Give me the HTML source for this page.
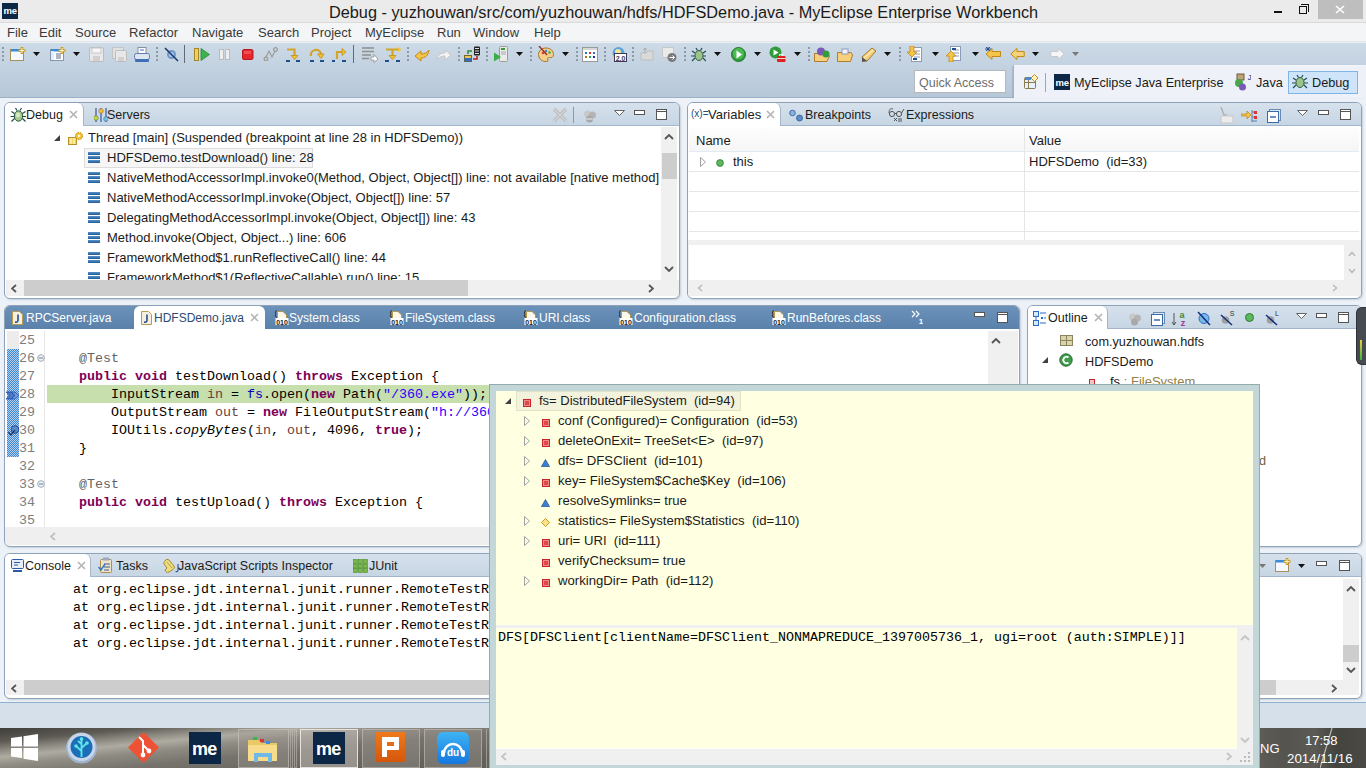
<!DOCTYPE html>
<html><head><meta charset="utf-8">
<style>
*{box-sizing:border-box;margin:0;padding:0}
html,body{width:1366px;height:768px;overflow:hidden;background:#edf2f8;font-family:"Liberation Sans",sans-serif;font-size:13px;color:#1b1b1b}
.a{position:absolute}
.t{position:absolute;white-space:pre;line-height:16px}
.mono{font-family:"Liberation Mono",monospace}
#title{left:0;top:0;width:1366px;height:23px;background:#ebebeb;border-bottom:1px solid #dadada}
#menu{left:0;top:23px;width:1366px;height:19px;background:#f4f5f7;border-bottom:1px solid #e2e5e9}
#menu .t{top:2px;margin-left:-1px;color:#3a3a3a}
#tool{left:0;top:42px;width:1366px;height:56px;background:linear-gradient(#cddae7,#b6c7d8);border-top:1px solid #eef0f3;border-bottom:1px solid #9eb0c3}
.pane{position:absolute;background:#fff;border:1px solid #8fa3b8;border-radius:6px;overflow:hidden;box-shadow:1px 1px 2px rgba(120,140,160,.35)}
.phdr{position:absolute;left:0;top:0;right:0;height:23px;background:linear-gradient(#d6e1ec,#c7d6e4);border-bottom:1px solid #a3b6ca}
.tab{position:absolute;top:0;height:23px;background:#fff;border-radius:0 6px 0 0;border-right:1px solid #a3b6ca}
.sb{position:absolute;background:#f0f0f0}
.k{color:#7f0055;font-weight:bold}
.thumb{position:absolute;background:#cdcdcd}
</style></head><body>

<div id="title" class="a">
  <div class="a" style="left:2px;top:3px;width:16px;height:16px;background:#0d2747"></div>
  <div class="t" style="left:3.5px;top:6px;color:#fff;font:bold 9.5px/9px 'Liberation Sans';letter-spacing:-0.3px">me</div>
  <div class="t" style="left:329px;top:3px;font-size:16.3px;line-height:18px;color:#1a1a1a">Debug - yuzhouwan/src/com/yuzhouwan/hdfs/HDFSDemo.java - MyEclipse Enterprise Workbench</div>
  <div class="a" style="left:1274px;top:11px;width:8px;height:2px;background:#111"></div>
  <div class="a" style="left:1299px;top:6px;width:8px;height:8px;border:1.5px solid #111"></div>
  <div class="a" style="left:1301px;top:4px;width:8px;height:8px;border-top:1.5px solid #111;border-right:1.5px solid #111"></div>
  <div class="a" style="left:1318px;top:0;width:45px;height:19px;background:#bebebe"></div>
  <svg class="a" style="left:1335px;top:5px" width="10" height="9"><path d="M1 1L9 8M9 1L1 8" stroke="#fff" stroke-width="1.6"/></svg>
</div>
<div id="menu" class="a">
  <div class="t" style="left:8px">File</div>
  <div class="t" style="left:40px">Edit</div>
  <div class="t" style="left:76px">Source</div>
  <div class="t" style="left:130px">Refactor</div>
  <div class="t" style="left:193px">Navigate</div>
  <div class="t" style="left:259px">Search</div>
  <div class="t" style="left:312px">Project</div>
  <div class="t" style="left:366px">MyEclipse</div>
  <div class="t" style="left:438px">Run</div>
  <div class="t" style="left:474px">Window</div>
  <div class="t" style="left:535px">Help</div>
</div>
<div id="tool" class="a"></div>
<div class="a" style="left:1013px;top:65px;width:353px;height:33px;background:#eef2f8;border-radius:2px 0 0 0;border-left:1px solid #a3b3c4;border-top:1px solid #f4f7fa;box-shadow:-1px 0 1px rgba(140,160,180,.5)"></div>
<div class="a" style="left:914px;top:70px;width:92px;height:23px;background:#fff;border:1px solid #b5b9bd"></div>
<div class="t" style="left:919px;top:75px;color:#6d6d6d;font-size:12.5px">Quick Access</div>
<div class="a" style="left:1045px;top:73px;width:1px;height:19px;background:#9aa8b6"></div>
<div class="a" style="left:1054px;top:74px;width:16px;height:16px;background:#0d2747"></div>
<div class="t" style="left:1055.5px;top:78px;color:#fff;font:bold 9.5px/9px 'Liberation Sans';letter-spacing:-0.3px">me</div>
<div class="t" style="left:1074px;top:75px;font-size:12.7px">MyEclipse Java Enterprise</div>
<div class="t" style="left:1256px;top:75px;font-size:12.7px">Java</div>
<div class="a" style="left:1288px;top:71px;width:70px;height:23px;background:#cfe4f8;border:1px solid #80b5e8"></div>
<div class="t" style="left:1312px;top:75px;font-size:12.7px">Debug</div>

<svg class="a" style="left:2px;top:47px" width="2" height="14" viewBox="0 0 2 14"><rect x="0" y="0" width="2" height="2" fill="#8b99a8"/><rect x="0" y="4" width="2" height="2" fill="#8b99a8"/><rect x="0" y="8" width="2" height="2" fill="#8b99a8"/><rect x="0" y="12" width="2" height="2" fill="#8b99a8"/></svg>
<svg class="a" style="left:10px;top:47px" width="16" height="15" viewBox="0 0 16 15"><rect x="0.5" y="2.5" width="13" height="11" fill="#f3f9ff" stroke="#a88f58"/><rect x="1" y="2" width="12" height="2.5" fill="#3d8ad8"/><path d="M12 0V7M8.5 3.5H15.5" stroke="#c79a1e" stroke-width="2.6"/><path d="M12 1V6M9.5 3.5H14.5" stroke="#fff6c8" stroke-width="1"/></svg>
<svg class="a" style="left:33px;top:52px" width="7" height="4" viewBox="0 0 7 4"><path d="M0 0H7L3.5 4Z" fill="#111"/></svg>
<svg class="a" style="left:50px;top:47px" width="16" height="15" viewBox="0 0 16 15"><rect x="0.5" y="2.5" width="13" height="11" fill="#fff" stroke="#8796aa"/><rect x="1" y="2" width="12" height="2.5" fill="#3d8ad8"/><rect x="1" y="4" width="3" height="9" fill="#dbefff"/><path d="M6 7H11M6 9H11M6 11H11" stroke="#5a6f8a"/><path d="M12 0V7M8.5 3.5H15.5" stroke="#c79a1e" stroke-width="2.6"/><path d="M12 1V6M9.5 3.5H14.5" stroke="#fff6c8" stroke-width="1"/></svg>
<svg class="a" style="left:73px;top:52px" width="7" height="4" viewBox="0 0 7 4"><path d="M0 0H7L3.5 4Z" fill="#111"/></svg>
<svg class="a" style="left:89px;top:47px" width="16" height="15" viewBox="0 0 16 15"><rect x="0.5" y="0.5" width="14" height="14" rx="1.5" fill="#e8e8e8" stroke="#bdbdbd"/><rect x="3" y="1" width="9" height="5" fill="#f7f7f7" stroke="#c8c8c8"/><rect x="4" y="9" width="7" height="5" fill="#d0d0d0"/></svg>
<svg class="a" style="left:112px;top:47px" width="16" height="15" viewBox="0 0 16 15"><rect x="0.5" y="0.5" width="11" height="11" fill="#e2e2e2" stroke="#c4c4c4"/><rect x="3.5" y="3.5" width="11" height="11" rx="1" fill="#e8e8e8" stroke="#bdbdbd"/><rect x="6" y="10" width="6" height="4" fill="#d0d0d0"/></svg>
<svg class="a" style="left:134px;top:47px" width="16" height="15" viewBox="0 0 16 15"><rect x="4" y="0.5" width="8" height="6" fill="#fff" stroke="#8a8fa0"/><rect x="0.5" y="6.5" width="15" height="6" rx="2" fill="#dfe6f2" stroke="#5b7bb5"/><rect x="1" y="12" width="14" height="3" rx="1" fill="#3f6fb5"/><path d="M6 3H10" stroke="#3f6fb5"/></svg>
<svg class="a" style="left:156px;top:47px" width="2" height="14" viewBox="0 0 2 14"><rect x="0" y="0" width="2" height="2" fill="#8b99a8"/><rect x="0" y="4" width="2" height="2" fill="#8b99a8"/><rect x="0" y="8" width="2" height="2" fill="#8b99a8"/><rect x="0" y="12" width="2" height="2" fill="#8b99a8"/></svg>
<svg class="a" style="left:164px;top:47px" width="15" height="15" viewBox="0 0 15 15"><circle cx="7.5" cy="7.5" r="4.5" fill="#6f98c9"/><circle cx="7.5" cy="7.5" r="2.5" fill="#a9c6e8"/><path d="M1 1L14 14" stroke="#15346d" stroke-width="1.5"/></svg>
<div class="a" style="left:184px;top:45px;width:1px;height:18px;background:#5f6b78"></div>
<svg class="a" style="left:194px;top:48px" width="16" height="13" viewBox="0 0 16 13"><rect x="0.5" y="0.5" width="4" height="12" fill="#f2cf56" stroke="#a3852b"/><path d="M7 0.5L15.5 6.5L7 12.5Z" fill="#3bb34a" stroke="#2a8a37" stroke-width="0.8"/></svg>
<svg class="a" style="left:219px;top:49px" width="12" height="11" viewBox="0 0 12 11"><rect x="0.5" y="0.5" width="4" height="10" fill="#eee" stroke="#bbb"/><rect x="6.5" y="0.5" width="4" height="10" fill="#eee" stroke="#bbb"/></svg>
<svg class="a" style="left:242px;top:49px" width="12" height="11" viewBox="0 0 12 11"><rect x="0.5" y="0.5" width="10.5" height="10" rx="1.5" fill="#e8242c" stroke="#b41a1f"/><rect x="2" y="2" width="7" height="3" fill="#f47a7f" opacity=".5"/></svg>
<svg class="a" style="left:263px;top:47px" width="15" height="14" viewBox="0 0 15 14"><path d="M2 12L6 4L9 10L13 2" stroke="#9a9a9a" stroke-width="1.2" fill="none"/><circle cx="3" cy="12" r="2" fill="#c9c9c9" stroke="#8f8f8f"/><circle cx="12.5" cy="2.5" r="2" fill="#c9c9c9" stroke="#8f8f8f"/></svg>
<svg class="a" style="left:286px;top:47px" width="16" height="15" viewBox="0 0 16 15"><path d="M1 2.5H8.5V10" stroke="#d4a32a" stroke-width="2.2" fill="none"/><path d="M5 8.5H12L8.5 12.5Z" fill="#f1c232" stroke="#c28f13" stroke-width=".8"/><rect x="0" y="13" width="4" height="2" fill="#1f4f8a"/><rect x="10" y="13" width="4" height="2" fill="#1f4f8a"/></svg>
<svg class="a" style="left:309px;top:47px" width="16" height="15" viewBox="0 0 16 15"><path d="M2 9A5 5 0 0 1 12 7" stroke="#d4a32a" stroke-width="2.2" fill="none"/><path d="M8.5 7H15L12 11.5Z" fill="#f1c232" stroke="#c28f13" stroke-width=".8"/><rect x="1" y="13" width="4" height="2" fill="#1f4f8a"/><rect x="11" y="13" width="4" height="2" fill="#1f4f8a"/></svg>
<svg class="a" style="left:332px;top:47px" width="16" height="15" viewBox="0 0 16 15"><path d="M5 12V5H10" stroke="#d4a32a" stroke-width="2.2" fill="none"/><path d="M10 1.5V8.5L14 5Z" fill="#f1c232" stroke="#c28f13" stroke-width=".8"/><rect x="0" y="13" width="3" height="2" fill="#1f4f8a"/><rect x="10" y="13" width="4" height="2" fill="#1f4f8a"/></svg>
<div class="a" style="left:353px;top:45px;width:1px;height:18px;background:#5f6b78"></div>
<svg class="a" style="left:362px;top:47px" width="16" height="16" viewBox="0 0 16 16"><path d="M0 1H12M0 4.5H12M0 8H9M0 11.5H7" stroke="#8f8f8f" stroke-width="1.5"/><path d="M9 10H12V7.5L16 12L12 15.5V13H9Z" fill="#fff" stroke="#8f8f8f" stroke-width=".8"/></svg>
<svg class="a" style="left:385px;top:47px" width="17" height="15" viewBox="0 0 17 15"><path d="M1 2.5H14M7.5 2.5V10" stroke="#d4a32a" stroke-width="2.2" fill="none"/><path d="M13 0L16.5 2.5L13 5Z" fill="#f1c232"/><path d="M4 8.5H11L7.5 12.5Z" fill="#f1c232" stroke="#c28f13" stroke-width=".8"/><rect x="0" y="13" width="4" height="2" fill="#1f4f8a"/><rect x="11" y="13" width="4" height="2" fill="#1f4f8a"/></svg>
<svg class="a" style="left:407px;top:47px" width="2" height="14" viewBox="0 0 2 14"><rect x="0" y="0" width="2" height="2" fill="#8b99a8"/><rect x="0" y="4" width="2" height="2" fill="#8b99a8"/><rect x="0" y="8" width="2" height="2" fill="#8b99a8"/><rect x="0" y="12" width="2" height="2" fill="#8b99a8"/></svg>
<svg class="a" style="left:414px;top:47px" width="16" height="15" viewBox="0 0 16 15"><path d="M1 9L7 14V11C11 11 14 9 15 3C13 6 10 7 7 7V4Z" fill="#f5c44a" stroke="#c48a16" stroke-width="1"/></svg>
<svg class="a" style="left:436px;top:47px" width="16" height="15" viewBox="0 0 16 15"><path d="M15 8L9 3V6C5 6 2 7 1 13C3 10 6 9 9 9V13Z" fill="#f4f4f4" stroke="#c7c7c7" stroke-width="1"/></svg>
<svg class="a" style="left:458px;top:47px" width="2" height="14" viewBox="0 0 2 14"><rect x="0" y="0" width="2" height="2" fill="#8b99a8"/><rect x="0" y="4" width="2" height="2" fill="#8b99a8"/><rect x="0" y="8" width="2" height="2" fill="#8b99a8"/><rect x="0" y="12" width="2" height="2" fill="#8b99a8"/></svg>
<svg class="a" style="left:464px;top:46px" width="17" height="16" viewBox="0 0 17 16"><rect x="10" y="0.5" width="6" height="9" rx="1" fill="#222"/><path d="M11 2.5H15M11 5H15M11 7.5H15" stroke="#ddd"/><rect x="0.5" y="9.5" width="7" height="6" fill="#e8c65a" stroke="#7a6520"/><rect x="0.5" y="12" width="7" height="3.5" fill="#2f6db8"/><path d="M8 5H4V8" stroke="#2c8a2c" stroke-width="1.5" fill="none"/><path d="M9 13H13V10" stroke="#b41f1f" stroke-width="1.5" fill="none"/></svg>
<svg class="a" style="left:486px;top:47px" width="2" height="14" viewBox="0 0 2 14"><rect x="0" y="0" width="2" height="2" fill="#8b99a8"/><rect x="0" y="4" width="2" height="2" fill="#8b99a8"/><rect x="0" y="8" width="2" height="2" fill="#8b99a8"/><rect x="0" y="12" width="2" height="2" fill="#8b99a8"/></svg>
<svg class="a" style="left:494px;top:46px" width="14" height="16" viewBox="0 0 14 16"><rect x="5.5" y="0.5" width="8" height="15" rx="1" fill="#eaeaea" stroke="#9aa08a"/><rect x="7" y="2" width="4" height="2" fill="#3a9a3a"/><path d="M7 6H12M7 8H12" stroke="#aaa"/><path d="M0 6.5L7 11L0 15.5Z" fill="#39ad48"/></svg>
<svg class="a" style="left:516px;top:52px" width="7" height="4" viewBox="0 0 7 4"><path d="M0 0H7L3.5 4Z" fill="#111"/></svg>
<svg class="a" style="left:530px;top:47px" width="2" height="14" viewBox="0 0 2 14"><rect x="0" y="0" width="2" height="2" fill="#8b99a8"/><rect x="0" y="4" width="2" height="2" fill="#8b99a8"/><rect x="0" y="8" width="2" height="2" fill="#8b99a8"/><rect x="0" y="12" width="2" height="2" fill="#8b99a8"/></svg>
<svg class="a" style="left:538px;top:46px" width="16" height="16" viewBox="0 0 16 16"><path d="M8 2C12.5 2 15.5 5 15.5 8.5C15.5 11.5 13 12 11.5 11.5C10 11 9 12 10 14C10.5 15.5 8.5 15.5 7 15.5C3 15 0.5 12 0.5 8.5C0.5 5 3.5 2 8 2Z" fill="#f5d08a" stroke="#a8742c"/><circle cx="5" cy="7" r="1.3" fill="#e23b3b"/><circle cx="8" cy="5" r="1.3" fill="#3a8ad9"/><circle cx="11.5" cy="6.5" r="1.3" fill="#3aa848"/><path d="M1 0L9 9" stroke="#9b2a2a" stroke-width="1.4"/></svg>
<svg class="a" style="left:562px;top:52px" width="7" height="4" viewBox="0 0 7 4"><path d="M0 0H7L3.5 4Z" fill="#111"/></svg>
<svg class="a" style="left:576px;top:47px" width="2" height="14" viewBox="0 0 2 14"><rect x="0" y="0" width="2" height="2" fill="#8b99a8"/><rect x="0" y="4" width="2" height="2" fill="#8b99a8"/><rect x="0" y="8" width="2" height="2" fill="#8b99a8"/><rect x="0" y="12" width="2" height="2" fill="#8b99a8"/></svg>
<svg class="a" style="left:582px;top:47px" width="16" height="15" viewBox="0 0 16 15"><rect x="0.5" y="0.5" width="15" height="14" fill="#fff" stroke="#9a9a9a"/><rect x="1" y="1" width="14" height="2" fill="#d8d8d8"/><rect x="3" y="5" width="2" height="2" fill="#2b6cd1"/><rect x="7" y="5" width="2" height="2" fill="#d12b2b"/><rect x="11" y="5" width="2" height="2" fill="#2b6cd1"/><rect x="3" y="9" width="2" height="2" fill="#b4751f"/><rect x="7" y="9" width="2" height="2" fill="#2ba84a"/><rect x="11" y="9" width="2" height="2" fill="#1f2fb4"/></svg>
<svg class="a" style="left:604px;top:47px" width="2" height="14" viewBox="0 0 2 14"><rect x="0" y="0" width="2" height="2" fill="#8b99a8"/><rect x="0" y="4" width="2" height="2" fill="#8b99a8"/><rect x="0" y="8" width="2" height="2" fill="#8b99a8"/><rect x="0" y="12" width="2" height="2" fill="#8b99a8"/></svg>
<svg class="a" style="left:612px;top:47px" width="15" height="15" viewBox="0 0 15 15"><circle cx="6.5" cy="6" r="6" fill="#5aa3e0"/><circle cx="6" cy="5" r="3" fill="#f2e3a0"/><rect x="2.5" y="6.5" width="12" height="8" fill="#fff" stroke="#3a3a5a"/><text x="8.5" y="13.5" font-size="7" font-family="Liberation Sans" font-weight="bold" fill="#3a3a5a" text-anchor="middle">2.0</text></svg>
<svg class="a" style="left:632px;top:47px" width="2" height="14" viewBox="0 0 2 14"><rect x="0" y="0" width="2" height="2" fill="#8b99a8"/><rect x="0" y="4" width="2" height="2" fill="#8b99a8"/><rect x="0" y="8" width="2" height="2" fill="#8b99a8"/><rect x="0" y="12" width="2" height="2" fill="#8b99a8"/></svg>
<svg class="a" style="left:640px;top:47px" width="14" height="14" viewBox="0 0 14 14"><path d="M1 6H6L8 4H13V13H1Z" fill="#d9d9d9" stroke="#bdbdbd"/><path d="M5 1V6M3 3L5 1L7 3" stroke="#aaa" fill="none"/></svg>
<svg class="a" style="left:662px;top:47px" width="15" height="15" viewBox="0 0 15 15"><rect x="0.5" y="0.5" width="11" height="10" fill="#eaeaea" stroke="#c8c8c8"/><circle cx="10" cy="10.5" r="4.5" fill="#7a7a7a"/><path d="M7.5 10.5H12M10.5 8.5L12.5 10.5L10.5 12.5" stroke="#fff" fill="none"/></svg>
<svg class="a" style="left:684px;top:47px" width="2" height="14" viewBox="0 0 2 14"><rect x="0" y="0" width="2" height="2" fill="#8b99a8"/><rect x="0" y="4" width="2" height="2" fill="#8b99a8"/><rect x="0" y="8" width="2" height="2" fill="#8b99a8"/><rect x="0" y="12" width="2" height="2" fill="#8b99a8"/></svg>
<svg class="a" style="left:691px;top:47px" width="15" height="15" viewBox="0 0 15 15"><ellipse cx="8" cy="8.5" rx="4" ry="5" fill="#9dc38a" stroke="#2b5d3a"/><path d="M1 4L4 6M0 9H4M1 14L4 11M15 4L12 6M16 9H12M15 14L12 11M5 1L6.5 3.5M11 1L9.5 3.5" stroke="#1e4d55" stroke-width="1.2"/></svg>
<svg class="a" style="left:714px;top:52px" width="7" height="4" viewBox="0 0 7 4"><path d="M0 0H7L3.5 4Z" fill="#111"/></svg>
<svg class="a" style="left:731px;top:47px" width="15" height="15" viewBox="0 0 15 15"><circle cx="7.5" cy="7.5" r="7" fill="#2f9b3a" stroke="#1f7a2a"/><circle cx="7.5" cy="6.5" r="5.5" fill="#4dbb55"/><path d="M5.5 3.5L11 7.5L5.5 11.5Z" fill="#fff"/></svg>
<svg class="a" style="left:754px;top:52px" width="7" height="4" viewBox="0 0 7 4"><path d="M0 0H7L3.5 4Z" fill="#111"/></svg>
<svg class="a" style="left:769px;top:46px" width="17" height="17" viewBox="0 0 17 17"><circle cx="6.5" cy="6.5" r="6" fill="#2f9b3a"/><path d="M4.5 3.5L9.5 6.5L4.5 9.5Z" fill="#fff"/><rect x="8" y="10" width="8.5" height="6" rx="1" fill="#dd2020"/><path d="M10.5 10V8.5H14V10M8 12.5H16.5" stroke="#fff" stroke-width=".8" fill="none"/></svg>
<svg class="a" style="left:794px;top:52px" width="7" height="4" viewBox="0 0 7 4"><path d="M0 0H7L3.5 4Z" fill="#111"/></svg>
<svg class="a" style="left:808px;top:47px" width="2" height="14" viewBox="0 0 2 14"><rect x="0" y="0" width="2" height="2" fill="#8b99a8"/><rect x="0" y="4" width="2" height="2" fill="#8b99a8"/><rect x="0" y="8" width="2" height="2" fill="#8b99a8"/><rect x="0" y="12" width="2" height="2" fill="#8b99a8"/></svg>
<svg class="a" style="left:814px;top:47px" width="17" height="15" viewBox="0 0 17 15"><path d="M0.5 6.5H13L15.5 9L13 14.5H0.5Z" fill="#f8cf7a" stroke="#b07d2a"/><circle cx="7" cy="4.5" r="4" fill="#7a5ab8"/><circle cx="12" cy="7" r="3.5" fill="#2f9b3a"/></svg>
<svg class="a" style="left:837px;top:48px" width="16" height="14" viewBox="0 0 16 14"><path d="M0.5 4.5H14L15.5 7L13.5 13.5H0.5Z" fill="#f8cf7a" stroke="#b07d2a"/><rect x="5" y="1" width="6" height="5" fill="#eef3ff" stroke="#8d9ab8"/></svg>
<svg class="a" style="left:861px;top:47px" width="17" height="15" viewBox="0 0 17 15"><path d="M3 14L1 10L11 1L15 4L6 14Z" fill="#f3d27a" stroke="#a8742c"/><path d="M1 10L6 14L1 15Z" fill="#555"/><path d="M3 11L12 3" stroke="#fff8d8"/></svg>
<svg class="a" style="left:884px;top:52px" width="7" height="4" viewBox="0 0 7 4"><path d="M0 0H7L3.5 4Z" fill="#111"/></svg>
<svg class="a" style="left:899px;top:47px" width="2" height="14" viewBox="0 0 2 14"><rect x="0" y="0" width="2" height="2" fill="#8b99a8"/><rect x="0" y="4" width="2" height="2" fill="#8b99a8"/><rect x="0" y="8" width="2" height="2" fill="#8b99a8"/><rect x="0" y="12" width="2" height="2" fill="#8b99a8"/></svg>
<svg class="a" style="left:907px;top:46px" width="15" height="16" viewBox="0 0 15 16"><rect x="4.5" y="1.5" width="10" height="14" fill="#fff" stroke="#8d9ab8"/><path d="M7 5H13M7 8H13M7 11H13" stroke="#8d9ab8"/><rect x="6" y="12" width="4" height="2" fill="#1f4f8a"/><path d="M3 0V6H0L5 11L10 6H7V0Z" fill="#f5c44a" stroke="#c48a16" stroke-width=".8"/></svg>
<svg class="a" style="left:932px;top:52px" width="7" height="4" viewBox="0 0 7 4"><path d="M0 0H7L3.5 4Z" fill="#111"/></svg>
<svg class="a" style="left:946px;top:46px" width="15" height="16" viewBox="0 0 15 16"><rect x="4.5" y="0.5" width="10" height="14" fill="#fff" stroke="#8d9ab8"/><path d="M7 4H13M7 7H13M7 10H13" stroke="#8d9ab8"/><rect x="6" y="2" width="4" height="2" fill="#1f4f8a"/><path d="M3 16V10H0L5 5L10 10H7V16Z" fill="#f5c44a" stroke="#c48a16" stroke-width=".8"/></svg>
<svg class="a" style="left:972px;top:52px" width="7" height="4" viewBox="0 0 7 4"><path d="M0 0H7L3.5 4Z" fill="#111"/></svg>
<svg class="a" style="left:985px;top:47px" width="17" height="14" viewBox="0 0 17 14"><path d="M1 7L7 1.5V4.5H15.5V9.5H7V12.5Z" fill="#f5c44a" stroke="#c48a16"/><path d="M1 0L5 4M5 0L1 4M3 0V4M0 2H6" stroke="#1f4f8a" stroke-width=".9"/></svg>
<svg class="a" style="left:1010px;top:47px" width="15" height="14" viewBox="0 0 15 14"><path d="M0.8 7L7 1.5V4.5H14.2V9.5H7V12.5Z" fill="#f5d27a" stroke="#c48a16"/></svg>
<svg class="a" style="left:1032px;top:52px" width="7" height="4" viewBox="0 0 7 4"><path d="M0 0H7L3.5 4Z" fill="#111"/></svg>
<svg class="a" style="left:1050px;top:47px" width="15" height="14" viewBox="0 0 15 14"><path d="M14.2 7L8 1.5V4.5H0.8V9.5H8V12.5Z" fill="#f6f6f6" stroke="#c9c9c9"/></svg>
<svg class="a" style="left:1072px;top:52px" width="7" height="4" viewBox="0 0 7 4"><path d="M0 0H7L3.5 4Z" fill="#777"/></svg>
<svg class="a" style="left:1023px;top:74px" width="16" height="16" viewBox="0 0 16 16"><rect x="1.5" y="3.5" width="11" height="11" rx="1" fill="#e6f2fb" stroke="#8a7a50"/><rect x="2" y="3.5" width="6" height="2.5" fill="#4a8ad0"/><path d="M1.5 8.5H12.5M5.5 6V14.5" stroke="#8a7a50"/><path d="M11.5 0.5L15 4L11.5 7.5L8 4Z" fill="#fff4c0" stroke="#c0901a"/></svg>
<svg class="a" style="left:1234px;top:73px" width="17" height="18" viewBox="0 0 17 18"><rect x="3" y="1" width="7" height="6" fill="#c0a37a" stroke="#6d5a3a"/><circle cx="5" cy="10" r="4" fill="#4aa84a"/><circle cx="8.5" cy="14" r="3.5" fill="#7a5ab8"/><text x="13.5" y="7" font-size="8" font-weight="bold" font-family="Liberation Sans" fill="#2a5aa8">J</text></svg>
<svg class="a" style="left:1292px;top:74px" width="16" height="16" viewBox="0 0 16 16"><ellipse cx="8" cy="8.5" rx="4" ry="5" fill="#9dc38a" stroke="#2b5d3a"/><path d="M1 4L4 6M0 9H4M1 14L4 11M15 4L12 6M16 9H12M15 14L12 11M5 1L6.5 3.5M11 1L9.5 3.5" stroke="#1e4d55" stroke-width="1.2"/></svg>
<div class="pane" style="left:4px;top:102px;width:676px;height:197px">
<div class="phdr"></div>
<div class="tab" style="left:0;width:79px"></div>
<svg class="a" style="left:5px;top:4px;" width="16" height="16" viewBox="0 0 16 16"><ellipse cx="8.5" cy="9" rx="4.2" ry="5.2" fill="#a5c98f" stroke="#2d5e3c"/><ellipse cx="8" cy="8" rx="2" ry="2.6" fill="#d7ecc6"/><path d="M1.5 4.5L4.5 6.5M0.5 9.5H4.5M1.5 14.5L4.5 11.5M15.5 4.5L12.5 6.5M16 9.5H12.5M15.5 14.5L12.5 11.5M5.5 1L7 3.5M11.5 1L10 3.5" stroke="#1f4b52" stroke-width="1.2"/></svg>
<div class="t" style="left:21px;top:4px;font-size:12.5px">Debug</div>
<svg class="a" style="left:64px;top:7px;" width="9" height="9" viewBox="0 0 9 9"><path d="M1 1L8 8M8 1L1 8" stroke="#b4b4b4" stroke-width="1.6"/></svg>
<svg class="a" style="left:89px;top:5px;" width="14" height="15" viewBox="0 0 14 15"><path d="M2 0V14M7 0V14M12 0V14" stroke="#3a55a8" stroke-width="1.2"/><circle cx="2" cy="10" r="2.3" fill="#c4d84a" stroke="#6a7a20" stroke-width=".6"/><circle cx="7" cy="3" r="2.3" fill="#f2c040" stroke="#a07010" stroke-width=".6"/><circle cx="12" cy="11" r="2.3" fill="#7ac4e8" stroke="#2a70a0" stroke-width=".6"/></svg>
<div class="t" style="left:102px;top:4px;font-size:12.5px">Servers</div>
<svg class="a" style="left:547px;top:4px;" width="16" height="16" viewBox="0 0 16 16"><path d="M2 2L14 14M14 2L2 14" stroke="#b9b9b9" stroke-width="3.2"/><path d="M2 2L14 14M14 2L2 14" stroke="#d6d6d6" stroke-width="1.4"/></svg>
<div class="a" style="left:568px;top:4px;width:1px;height:16px;background:#8a9aaa"></div>
<svg class="a" style="left:578px;top:6px;" width="14" height="14" viewBox="0 0 14 14"><circle cx="4.5" cy="5" r="3.5" fill="#c8c8c8"/><circle cx="9.5" cy="6" r="3.5" fill="#b5b5b5"/><circle cx="6.5" cy="10" r="3.5" fill="#a8a8a8"/><path d="M3.5 10H9.5" stroke="#eee"/></svg>
<svg class="a" style="left:609px;top:7px;" width="11" height="6" viewBox="0 0 11 6"><path d="M0.5 0.5H10.5L5.5 5.5Z" fill="#fff" stroke="#666"/></svg>
<svg class="a" style="left:629px;top:7px;" width="11" height="5" viewBox="0 0 11 5"><rect x="0.5" y="0.5" width="10" height="4" fill="#fff" stroke="#555"/></svg>
<svg class="a" style="left:651px;top:6px;" width="11" height="11" viewBox="0 0 11 11"><rect x="0.5" y="0.5" width="10" height="10" fill="#fff" stroke="#555"/><path d="M1 2.5H10" stroke="#555"/></svg>
<div class="a" style="left:79px;top:45px;width:229px;height:20px;background:#f6f6f6;border:1px solid #dcdcdc"></div>
<svg class="a" style="left:49px;top:32px;" width="6" height="6" viewBox="0 0 6 6"><path d="M6 0V6H0Z" fill="#404040"/></svg>
<svg class="a" style="left:63px;top:28px;" width="16" height="16" viewBox="0 0 16 16"><rect x="0.5" y="6.5" width="8" height="7" fill="#f5d76a" stroke="#b8902a"/><path d="M3 7V13M6 7V13" stroke="#fff8c8" stroke-width="1.2"/><circle cx="11" cy="5" r="3.6" fill="#f5c030" stroke="#c08a10" stroke-dasharray="1.5 1"/><circle cx="11" cy="5" r="1.3" fill="#fff"/></svg>
<div class="t" style="left:83px;top:27px;">Thread [main] (Suspended (breakpoint at line 28 in HDFSDemo))</div>
<div class="a" style="left:0;top:24px;width:656px;height:153px;overflow:hidden">
<svg class="a" style="left:83px;top:25px;" width="13" height="11" viewBox="0 0 13 11"><defs><linearGradient id="fg" x1="0" y1="0" x2="0" y2="1"><stop offset="0" stop-color="#5b93c9"/><stop offset="1" stop-color="#1e5a9a"/></linearGradient></defs><rect x="0" y="0" width="12" height="3" fill="url(#fg)"/><rect x="0" y="4" width="12" height="3" fill="url(#fg)"/><rect x="0" y="8" width="12" height="3" fill="url(#fg)"/></svg>
<div class="t" style="left:102px;top:23px;">HDFSDemo.testDownload() line: 28</div>
<svg class="a" style="left:83px;top:45px;" width="13" height="11" viewBox="0 0 13 11"><defs><linearGradient id="fg" x1="0" y1="0" x2="0" y2="1"><stop offset="0" stop-color="#5b93c9"/><stop offset="1" stop-color="#1e5a9a"/></linearGradient></defs><rect x="0" y="0" width="12" height="3" fill="url(#fg)"/><rect x="0" y="4" width="12" height="3" fill="url(#fg)"/><rect x="0" y="8" width="12" height="3" fill="url(#fg)"/></svg>
<div class="t" style="left:102px;top:43px;">NativeMethodAccessorImpl.invoke0(Method, Object, Object[]) line: not available [native method]</div>
<svg class="a" style="left:83px;top:65px;" width="13" height="11" viewBox="0 0 13 11"><defs><linearGradient id="fg" x1="0" y1="0" x2="0" y2="1"><stop offset="0" stop-color="#5b93c9"/><stop offset="1" stop-color="#1e5a9a"/></linearGradient></defs><rect x="0" y="0" width="12" height="3" fill="url(#fg)"/><rect x="0" y="4" width="12" height="3" fill="url(#fg)"/><rect x="0" y="8" width="12" height="3" fill="url(#fg)"/></svg>
<div class="t" style="left:102px;top:63px;">NativeMethodAccessorImpl.invoke(Object, Object[]) line: 57</div>
<svg class="a" style="left:83px;top:85px;" width="13" height="11" viewBox="0 0 13 11"><defs><linearGradient id="fg" x1="0" y1="0" x2="0" y2="1"><stop offset="0" stop-color="#5b93c9"/><stop offset="1" stop-color="#1e5a9a"/></linearGradient></defs><rect x="0" y="0" width="12" height="3" fill="url(#fg)"/><rect x="0" y="4" width="12" height="3" fill="url(#fg)"/><rect x="0" y="8" width="12" height="3" fill="url(#fg)"/></svg>
<div class="t" style="left:102px;top:83px;">DelegatingMethodAccessorImpl.invoke(Object, Object[]) line: 43</div>
<svg class="a" style="left:83px;top:105px;" width="13" height="11" viewBox="0 0 13 11"><defs><linearGradient id="fg" x1="0" y1="0" x2="0" y2="1"><stop offset="0" stop-color="#5b93c9"/><stop offset="1" stop-color="#1e5a9a"/></linearGradient></defs><rect x="0" y="0" width="12" height="3" fill="url(#fg)"/><rect x="0" y="4" width="12" height="3" fill="url(#fg)"/><rect x="0" y="8" width="12" height="3" fill="url(#fg)"/></svg>
<div class="t" style="left:102px;top:103px;">Method.invoke(Object, Object...) line: 606</div>
<svg class="a" style="left:83px;top:125px;" width="13" height="11" viewBox="0 0 13 11"><defs><linearGradient id="fg" x1="0" y1="0" x2="0" y2="1"><stop offset="0" stop-color="#5b93c9"/><stop offset="1" stop-color="#1e5a9a"/></linearGradient></defs><rect x="0" y="0" width="12" height="3" fill="url(#fg)"/><rect x="0" y="4" width="12" height="3" fill="url(#fg)"/><rect x="0" y="8" width="12" height="3" fill="url(#fg)"/></svg>
<div class="t" style="left:102px;top:123px;">FrameworkMethod$1.runReflectiveCall() line: 44</div>
<svg class="a" style="left:83px;top:145px;" width="13" height="11" viewBox="0 0 13 11"><defs><linearGradient id="fg" x1="0" y1="0" x2="0" y2="1"><stop offset="0" stop-color="#5b93c9"/><stop offset="1" stop-color="#1e5a9a"/></linearGradient></defs><rect x="0" y="0" width="12" height="3" fill="url(#fg)"/><rect x="0" y="4" width="12" height="3" fill="url(#fg)"/><rect x="0" y="8" width="12" height="3" fill="url(#fg)"/></svg>
<div class="t" style="left:102px;top:143px;">FrameworkMethod$1(ReflectiveCallable).run() line: 15</div>
</div>
<div class="sb" style="left:656px;top:24px;width:16px;height:153px"></div>
<svg class="a" style="left:659px;top:31px;" width="10" height="6" viewBox="0 0 10 6"><path d="M1 5L5 1L9 5" stroke="#555" stroke-width="1.8" fill="none"/></svg>
<div class="a" style="left:657px;top:50px;width:15px;height:26px;background:#cdcdcd"></div>
<svg class="a" style="left:659px;top:163px;" width="10" height="6" viewBox="0 0 10 6"><path d="M1 1L5 5L9 1" stroke="#555" stroke-width="1.8" fill="none"/></svg>
<div class="sb" style="left:1px;top:177px;width:673px;height:16px"></div>
<div class="a" style="left:19px;top:177px;width:444px;height:16px;background:#cdcdcd"></div>
<svg class="a" style="left:6px;top:181px;" width="6" height="9" viewBox="0 0 6 9"><path d="M5 1L1 4.5L5 8" stroke="#555" stroke-width="1.8" fill="none"/></svg>
<svg class="a" style="left:643px;top:181px;" width="6" height="9" viewBox="0 0 6 9"><path d="M1 1L5 4.5L1 8" stroke="#555" stroke-width="1.8" fill="none"/></svg>
</div>
<div class="pane" style="left:687px;top:102px;width:675px;height:197px">
<div class="phdr"></div>
<div class="tab" style="left:0;width:93px"></div>
<div class="t" style="left:3px;top:3px;font-size:10px;color:#2a4a7a">(x)=</div>
<div class="t" style="left:20px;top:4px;">Variables</div>
<svg class="a" style="left:78px;top:7px;" width="9" height="9" viewBox="0 0 9 9"><path d="M1 1L8 8M8 1L1 8" stroke="#b4b4b4" stroke-width="1.6"/></svg>
<svg class="a" style="left:101px;top:6px;" width="16" height="14" viewBox="0 0 16 14"><circle cx="3.5" cy="4" r="2.8" fill="#8ab4e0" stroke="#2a5a9a" stroke-width=".8"/><circle cx="10.5" cy="9" r="3" fill="#5a8ec8" stroke="#2a5a9a" stroke-width=".8"/></svg>
<div class="t" style="left:117px;top:4px;font-size:12.5px">Breakpoints</div>
<svg class="a" style="left:200px;top:4px;" width="18" height="16" viewBox="0 0 18 16"><path d="M1 6C1 2 3 1 5 2" stroke="#555" fill="none"/><circle cx="4" cy="7" r="2.6" fill="none" stroke="#555"/><circle cx="11" cy="7" r="2.6" fill="none" stroke="#555"/><path d="M6.5 6.5H8.5M13.5 6L16 2" stroke="#555"/><path d="M6 11L9 14M9 11L6 14M10 12H14M10 14H14" stroke="#444" stroke-width=".9"/></svg>
<div class="t" style="left:218px;top:4px;font-size:12.5px">Expressions</div>
<svg class="a" style="left:530px;top:4px;" width="16" height="17" viewBox="0 0 16 17"><path d="M3 0L6 8H9" stroke="#b0b0b0" stroke-width="1.5" fill="none"/><rect x="3" y="9" width="12" height="7" fill="#ececec" stroke="#c8c8c8"/></svg>
<svg class="a" style="left:553px;top:5px;" width="17" height="15" viewBox="0 0 17 15"><path d="M0 6H6V3L10 7L6 11V8H0Z" fill="#f5c44a" stroke="#c48a16" stroke-width=".8"/><path d="M11 2V14M11 4H16M11 9H16M11 13H16" stroke="#5a7fb0"/><rect x="13" y="3" width="3" height="3" fill="#d33"/><rect x="13" y="8" width="3" height="3" fill="#d33"/></svg>
<svg class="a" style="left:579px;top:6px;" width="14" height="14" viewBox="0 0 14 14"><rect x="2.5" y="0.5" width="11" height="11" fill="#dbe8f5" stroke="#6a8ab0"/><rect x="0.5" y="2.5" width="11" height="11" fill="#fff" stroke="#3a6aa8"/><path d="M3 8H9" stroke="#3a6aa8" stroke-width="1.5"/></svg>
<svg class="a" style="left:609px;top:7px;" width="11" height="6" viewBox="0 0 11 6"><path d="M0.5 0.5H10.5L5.5 5.5Z" fill="#fff" stroke="#666"/></svg>
<svg class="a" style="left:630px;top:7px;" width="11" height="5" viewBox="0 0 11 5"><rect x="0.5" y="0.5" width="10" height="4" fill="#fff" stroke="#555"/></svg>
<svg class="a" style="left:652px;top:6px;" width="11" height="11" viewBox="0 0 11 11"><rect x="0.5" y="0.5" width="10" height="10" fill="#fff" stroke="#555"/><path d="M1 2.5H10" stroke="#555"/></svg>
<div class="a" style="left:0px;top:137px;width:673px;height:56px;background:#f0f0f0"></div>
<div class="a" style="left:1px;top:25px;width:670px;height:24px;background:linear-gradient(#fdfdfd,#f6f6f6);border-bottom:1px solid #e2eaf3"></div>
<div class="a" style="left:336px;top:25px;width:1px;height:112px;background:#e6e6e6"></div>
<div class="t" style="left:8px;top:30px;">Name</div>
<div class="t" style="left:341px;top:30px;">Value</div>
<div class="a" style="left:1px;top:68px;width:670px;height:1px;background:#e6e6e6"></div>
<div class="a" style="left:1px;top:88px;width:670px;height:1px;background:#e6e6e6"></div>
<div class="a" style="left:1px;top:108px;width:670px;height:1px;background:#e6e6e6"></div>
<div class="a" style="left:1px;top:128px;width:670px;height:1px;background:#e6e6e6"></div>
<svg class="a" style="left:12px;top:54px;" width="6" height="10" viewBox="0 0 6 10"><path d="M0.5 0.5L5.5 5L0.5 9.5Z" fill="none" stroke="#a0a0a0"/></svg>
<svg class="a" style="left:28px;top:56px;" width="8" height="8" viewBox="0 0 8 8"><circle cx="4" cy="4" r="3.4" fill="#5cb85c" stroke="#2e7d32" stroke-width=".8"/></svg>
<div class="t" style="left:45px;top:51px;">this</div>
<div class="t" style="left:341px;top:51px;">HDFSDemo  (id=33)</div>
<div class="a" style="left:1px;top:142px;width:655px;height:35px;background:#fff"></div>
<svg class="a" style="left:660px;top:148px;" width="8" height="6" viewBox="0 0 8 6"><path d="M1 5L4 1.5L7 5" stroke="#bbb" stroke-width="1.6" fill="none"/></svg>
<svg class="a" style="left:660px;top:165px;" width="8" height="6" viewBox="0 0 8 6"><path d="M1 1L4 4.5L7 1" stroke="#bbb" stroke-width="1.6" fill="none"/></svg>
<svg class="a" style="left:9px;top:181px;" width="6" height="8" viewBox="0 0 6 8"><path d="M5 1L1.5 4L5 7" stroke="#bbb" stroke-width="1.6" fill="none"/></svg>
<svg class="a" style="left:644px;top:181px;" width="6" height="8" viewBox="0 0 6 8"><path d="M1 1L4.5 4L1 7" stroke="#bbb" stroke-width="1.6" fill="none"/></svg>
</div>
<div class="pane" style="left:4px;top:305px;width:1016px;height:242px">
<div class="phdr" style="background:linear-gradient(#6c92ba,#5a81ab);border-bottom:none"></div>
<div class="a" style="left:129px;top:0;width:131px;height:23px;background:#fff;border-radius:6px 6px 0 0"></div>
<svg class="a" style="left:7px;top:5px;" width="11" height="14" viewBox="0 0 11 14"><path d="M0.5 0.5H7.5L10.5 3.5V13.5H0.5Z" fill="#f4f0e0" stroke="#b89a50"/><path d="M6 3.5V9C6 11 5 11.5 3 11" stroke="#2a4a8a" stroke-width="1.6" fill="none"/></svg>
<div class="t" style="left:21px;top:4px;color:#fff;font-size:12px">RPCServer.java</div>
<svg class="a" style="left:136px;top:5px;" width="11" height="14" viewBox="0 0 11 14"><path d="M0.5 0.5H7.5L10.5 3.5V13.5H0.5Z" fill="#f4f0e0" stroke="#b89a50"/><path d="M6 3.5V9C6 11 5 11.5 3 11" stroke="#2a4a8a" stroke-width="1.6" fill="none"/></svg>
<div class="t" style="left:149px;top:4px;color:#2b4a75;font-size:12px">HDFSDemo.java</div>
<svg class="a" style="left:245px;top:7px;" width="9" height="9" viewBox="0 0 9 9"><path d="M1 1L8 8M8 1L1 8" stroke="#b8b8b8" stroke-width="1.6"/></svg>
<svg class="a" style="left:268px;top:4px;" width="16" height="15" viewBox="0 0 16 15"><path d="M4.5 1.5H10L13.5 5V14.5H4.5Z" fill="#fdf8e8" stroke="#b8984a"/><path d="M4 0.5C2 1 2 3 3 4C2 5 2 7 4 7.5" stroke="#333" fill="none"/><rect x="2.5" y="8" width="13" height="7" fill="#fff"/><text x="9" y="14.5" font-size="7" font-family="Liberation Sans" font-weight="bold" fill="#222" text-anchor="middle">010</text></svg>
<div class="t" style="left:284px;top:4px;color:#fff;font-size:12px">System.class</div>
<svg class="a" style="left:383px;top:4px;" width="16" height="15" viewBox="0 0 16 15"><path d="M4.5 1.5H10L13.5 5V14.5H4.5Z" fill="#fdf8e8" stroke="#b8984a"/><path d="M4 0.5C2 1 2 3 3 4C2 5 2 7 4 7.5" stroke="#333" fill="none"/><rect x="2.5" y="8" width="13" height="7" fill="#fff"/><text x="9" y="14.5" font-size="7" font-family="Liberation Sans" font-weight="bold" fill="#222" text-anchor="middle">010</text></svg>
<div class="t" style="left:400px;top:4px;color:#fff;font-size:12px">FileSystem.class</div>
<svg class="a" style="left:517px;top:4px;" width="16" height="15" viewBox="0 0 16 15"><path d="M4.5 1.5H10L13.5 5V14.5H4.5Z" fill="#fdf8e8" stroke="#b8984a"/><path d="M4 0.5C2 1 2 3 3 4C2 5 2 7 4 7.5" stroke="#333" fill="none"/><rect x="2.5" y="8" width="13" height="7" fill="#fff"/><text x="9" y="14.5" font-size="7" font-family="Liberation Sans" font-weight="bold" fill="#222" text-anchor="middle">010</text></svg>
<div class="t" style="left:534px;top:4px;color:#fff;font-size:12px">URI.class</div>
<svg class="a" style="left:612px;top:4px;" width="16" height="15" viewBox="0 0 16 15"><path d="M4.5 1.5H10L13.5 5V14.5H4.5Z" fill="#fdf8e8" stroke="#b8984a"/><path d="M4 0.5C2 1 2 3 3 4C2 5 2 7 4 7.5" stroke="#333" fill="none"/><rect x="2.5" y="8" width="13" height="7" fill="#fff"/><text x="9" y="14.5" font-size="7" font-family="Liberation Sans" font-weight="bold" fill="#222" text-anchor="middle">010</text></svg>
<div class="t" style="left:629px;top:4px;color:#fff;font-size:12px">Configuration.class</div>
<svg class="a" style="left:765px;top:4px;" width="16" height="15" viewBox="0 0 16 15"><path d="M4.5 1.5H10L13.5 5V14.5H4.5Z" fill="#fdf8e8" stroke="#b8984a"/><path d="M4 0.5C2 1 2 3 3 4C2 5 2 7 4 7.5" stroke="#333" fill="none"/><rect x="2.5" y="8" width="13" height="7" fill="#fff"/><text x="9" y="14.5" font-size="7" font-family="Liberation Sans" font-weight="bold" fill="#222" text-anchor="middle">010</text></svg>
<div class="t" style="left:782px;top:4px;color:#fff;font-size:12px">RunBefores.class</div>
<svg class="a" style="left:906px;top:4px;" width="12" height="14" viewBox="0 0 12 14"><path d="M1 1L4 4L1 7M5 1L8 4L5 7" stroke="#fff" fill="none" stroke-width="1.2"/><text x="10" y="13.5" font-size="8" font-family="Liberation Sans" font-weight="bold" fill="#fff" text-anchor="middle">1</text></svg>
<svg class="a" style="left:969px;top:6px;" width="11" height="5" viewBox="0 0 11 5"><rect x="0.5" y="0.5" width="10" height="4" fill="#fff" stroke="#555"/></svg>
<svg class="a" style="left:992px;top:6px;" width="11" height="11" viewBox="0 0 11 11"><rect x="0.5" y="0.5" width="10" height="10" fill="#fff" stroke="#555"/><path d="M1 2.5H10" stroke="#555"/></svg>
<div class="a" style="left:2px;top:25px;width:12px;height:18px;background:#ececec"></div>
<div class="a" style="left:2px;top:43px;width:12px;height:108px;background-color:#b5d0ee;background-image:linear-gradient(45deg,#3f86d4 25%,transparent 25%,transparent 75%,#3f86d4 75%),linear-gradient(45deg,#3f86d4 25%,transparent 25%,transparent 75%,#3f86d4 75%);background-size:2px 2px;background-position:0 0,1px 1px"></div>
<div class="a" style="left:14px;top:25px;width:25px;height:198px;background:#fff"></div>
<div class="a" style="left:39px;top:25px;width:1px;height:198px;background:#e6e6e6"></div>
<svg class="a" style="left:0px;top:84px;" width="16" height="11" viewBox="0 0 16 11"><path d="M1 2H6L10 5.5L6 9H1L5 5.5Z" fill="#4a7ac8" stroke="#1f4a9a" stroke-width=".8"/><path d="M6 2H10L14 5.5L10 9H6L10 5.5Z" fill="#6a9ae0" stroke="#1f4a9a" stroke-width=".8"/></svg>
<svg class="a" style="left:3px;top:119px;" width="12" height="11" viewBox="0 0 12 11"><circle cx="7" cy="4.5" r="3.8" fill="#5a8ac8" stroke="#1f4a9a"/><path d="M0.5 7L3 10L7 5" stroke="#1f3a6a" stroke-width="1.3" fill="none"/></svg>
<svg class="a" style="left:32px;top:48px;" width="8" height="8" viewBox="0 0 8 8"><circle cx="4" cy="4" r="3.3" fill="#f4f4f4" stroke="#9aaabb"/><path d="M2 4H6" stroke="#6a7a8a"/></svg>
<svg class="a" style="left:32px;top:174px;" width="8" height="8" viewBox="0 0 8 8"><circle cx="4" cy="4" r="3.3" fill="#f4f4f4" stroke="#9aaabb"/><path d="M2 4H6" stroke="#6a7a8a"/></svg>
<div class="a" style="left:42px;top:79px;width:941px;height:18px;background:#c7dfad"></div>
<div class="a mono" style="left:14px;top:26px;width:24px;font-size:13.33px;line-height:18px;color:#7d7d7d;white-space:pre">25
26
27
28
29
30
31
32
33
34
35</div>
<div class="a mono" style="left:42px;top:26px;font-size:13.33px;line-height:18px;color:#000;white-space:pre">
<span style="color:#646464">    @Test</span>
<b class="k">    public</b> <b class="k">void</b> testDownload() <b class="k">throws</b> Exception {
        InputStream <span style="color:#6a3e3e">in</span> = <span style="color:#0000c0">fs</span>.open(<b class="k">new</b> Path(<span style="color:#2a00ff">"/360.exe"</span>));
        OutputStream <span style="color:#6a3e3e">out</span> = <b class="k">new</b> FileOutputStream(<span style="color:#2a00ff">"h://360.exe"</span>);
        IOUtils.<i>copyBytes</i>(<span style="color:#6a3e3e">in</span>, <span style="color:#6a3e3e">out</span>, 4096, <b class="k">true</b>);
    }

<span style="color:#646464">    @Test</span>
<b class="k">    public</b> <b class="k">void</b> testUpload() <b class="k">throws</b> Exception {
</div>
<div class="a" style="left:983px;top:25px;width:30px;height:196px;background:#f0f0f0"></div>
<svg class="a" style="left:986px;top:32px;" width="10" height="6" viewBox="0 0 10 6"><path d="M1 5L5 1L9 5" stroke="#555" stroke-width="1.8" fill="none"/></svg>
<div class="a" style="left:0px;top:221px;width:1014px;height:18px;background:#efefef"></div>
<svg class="a" style="left:45px;top:226px;" width="6" height="9" viewBox="0 0 6 9"><path d="M5 1L1 4.5L5 8" stroke="#c0c0c0" stroke-width="1.8" fill="none"/></svg>
</div>
<div class="pane" style="left:1027px;top:305px;width:335px;height:242px">
<div class="phdr"></div>
<div class="tab" style="left:0;width:80px"></div>
<svg class="a" style="left:5px;top:5px;" width="14" height="15" viewBox="0 0 14 15"><rect x="0.5" y="0.5" width="5" height="5" fill="#dbe8fa" stroke="#2a6ac8"/><rect x="0.5" y="9.5" width="5" height="5" fill="#dbe8fa" stroke="#2a6ac8"/><path d="M7 2H13M7 12H13M3 6V9" stroke="#2a6ac8"/><rect x="8" y="6" width="2" height="2" fill="#2a6ac8"/><path d="M11 7H13" stroke="#2a6ac8"/></svg>
<div class="t" style="left:20px;top:4px;font-size:12.5px">Outline</div>
<svg class="a" style="left:66px;top:7px;" width="9" height="9" viewBox="0 0 9 9"><path d="M1 1L8 8M8 1L1 8" stroke="#b4b4b4" stroke-width="1.6"/></svg>
<svg class="a" style="left:100px;top:6px;" width="14" height="14" viewBox="0 0 14 14"><circle cx="4.5" cy="5" r="3.5" fill="#c8c8c8"/><circle cx="9.5" cy="6" r="3.5" fill="#b5b5b5"/><circle cx="6.5" cy="10" r="3.5" fill="#a8a8a8"/></svg>
<svg class="a" style="left:123px;top:6px;" width="14" height="14" viewBox="0 0 14 14"><rect x="2.5" y="0.5" width="11" height="11" fill="#dbe8f5" stroke="#6a8ab0"/><rect x="0.5" y="2.5" width="11" height="11" fill="#fff" stroke="#3a6aa8"/><path d="M3 8H9" stroke="#3a6aa8" stroke-width="1.5"/></svg>
<svg class="a" style="left:143px;top:4px;" width="18" height="17" viewBox="0 0 18 17"><path d="M3 3V15M1 12L3 15L5 12" stroke="#555" fill="none"/><text x="11" y="8" font-size="9" font-weight="bold" font-family="Liberation Sans" fill="#3a8a3a" text-anchor="middle">a</text><text x="12" y="16" font-size="9" font-weight="bold" font-family="Liberation Sans" fill="#a03a9a" text-anchor="middle">z</text></svg>
<svg class="a" style="left:169px;top:5px;" width="14" height="15" viewBox="0 0 14 15"><circle cx="7" cy="7.5" r="5" fill="#7ab8e8" stroke="#2a6ac8"/><path d="M1 1L13 14" stroke="#12307a" stroke-width="1.5"/></svg>
<svg class="a" style="left:192px;top:4px;" width="15" height="16" viewBox="0 0 15 16"><circle cx="5.5" cy="10" r="3.8" fill="#a0a0a0"/><path d="M1 5L12 15" stroke="#12307a" stroke-width="1.5"/><text x="12" y="6" font-size="7" font-family="Liberation Sans" fill="#333" text-anchor="middle">S</text></svg>
<svg class="a" style="left:217px;top:7px;" width="9" height="9" viewBox="0 0 9 9"><circle cx="4.5" cy="4.5" r="4" fill="#5cb85c" stroke="#2e7d32"/></svg>
<svg class="a" style="left:237px;top:4px;" width="15" height="16" viewBox="0 0 15 16"><circle cx="5.5" cy="10" r="3.8" fill="#a0a0a0"/><path d="M1 5L12 15" stroke="#12307a" stroke-width="1.5"/><text x="12" y="6" font-size="7" font-family="Liberation Sans" fill="#333" text-anchor="middle">L</text></svg>
<svg class="a" style="left:268px;top:7px;" width="11" height="6" viewBox="0 0 11 6"><path d="M0.5 0.5H10.5L5.5 5.5Z" fill="#fff" stroke="#666"/></svg>
<svg class="a" style="left:288px;top:7px;" width="11" height="5" viewBox="0 0 11 5"><rect x="0.5" y="0.5" width="10" height="4" fill="#fff" stroke="#555"/></svg>
<svg class="a" style="left:310px;top:6px;" width="11" height="11" viewBox="0 0 11 11"><rect x="0.5" y="0.5" width="10" height="10" fill="#fff" stroke="#555"/><path d="M1 2.5H10" stroke="#555"/></svg>
<svg class="a" style="left:32px;top:29px;" width="14" height="12" viewBox="0 0 14 12"><rect x="0.5" y="0.5" width="12" height="10" fill="#d8d3a8" stroke="#8a8460"/><path d="M6.5 0V11M0 5.5H13" stroke="#8a8460"/></svg>
<div class="t" style="left:57px;top:28px;font-size:12.7px">com.yuzhouwan.hdfs</div>
<svg class="a" style="left:14px;top:51px;" width="6" height="6" viewBox="0 0 6 6"><path d="M6 0V6H0Z" fill="#404040"/></svg>
<svg class="a" style="left:31px;top:47px;" width="14" height="14" viewBox="0 0 14 14"><circle cx="7" cy="7" r="6.2" fill="#3f9a4a" stroke="#2a6a30"/><path d="M9.5 4.5A3.2 3.2 0 1 0 9.5 9.5" stroke="#fff" stroke-width="1.8" fill="none"/></svg>
<div class="t" style="left:57px;top:48px;font-size:12.7px">HDFSDemo</div>
<svg class="a" style="left:61px;top:73px;" width="6" height="6" viewBox="0 0 6 6"><rect x="0.5" y="0.5" width="5" height="5" fill="#f6c6c6" stroke="#c8242c"/></svg>
<div class="t" style="left:82px;top:68px;">fs <span style="color:#957d47">: FileSystem</span></div>
<div class="t" style="left:231px;top:147px;font-size:12.7px;color:#6f5f45">d</div>
</div>
<div class="a" style="left:1356px;top:307px;width:10px;height:58px;background:#464b51;border-radius:6px 0 0 6px;border:1px solid #2e3236;border-right:none"></div>
<div class="a" style="left:1360px;top:340px;width:2px;height:20px;background:linear-gradient(#e8d040,#40b040)"></div>
<div class="pane" style="left:4px;top:553px;width:1358px;height:146px">
<div class="phdr"></div>
<div class="tab" style="left:0;width:86px"></div>
<svg class="a" style="left:6px;top:5px;" width="13" height="14" viewBox="0 0 13 14"><rect x="0.5" y="0.5" width="12" height="9" rx="1" fill="#e8eef8" stroke="#2a5aa8"/><path d="M3 3.5H9M3 6H7" stroke="#2a5aa8"/><rect x="2" y="11" width="9" height="2" fill="#2a5aa8"/></svg>
<div class="t" style="left:20px;top:4px;font-size:12.5px">Console</div>
<svg class="a" style="left:72px;top:7px;" width="9" height="9" viewBox="0 0 9 9"><path d="M1 1L8 8M8 1L1 8" stroke="#b4b4b4" stroke-width="1.6"/></svg>
<svg class="a" style="left:93px;top:3px;" width="15" height="16" viewBox="0 0 15 16"><rect x="2.5" y="2.5" width="11" height="13" rx="1" fill="#f0e4c8" stroke="#b08a50"/><rect x="5" y="0.5" width="6" height="3" fill="#9aa8c0"/><path d="M6 7H12M6 10H12M6 13H11" stroke="#3a5a9a"/><path d="M0.5 10L3 13L7 7" stroke="#2a7ac8" stroke-width="1.4" fill="none"/></svg>
<div class="t" style="left:111px;top:4px;font-size:12.5px">Tasks</div>
<svg class="a" style="left:157px;top:4px;" width="18" height="16" viewBox="0 0 18 16"><path d="M3 3C4 1 6 1 7 2L12 8C13 9.5 12 11 10 12L7 14C5 15 3.5 14 3 12L5 10L2 6C1.5 5 2 4 3 3Z" fill="#f0dc80" stroke="#9a8a30"/><path d="M5 4L10 10" stroke="#b8a040"/><path d="M16 6V12C16 13.5 15 14 13.5 13.5" stroke="#2a5aa8" stroke-width="1.2" fill="none"/></svg>
<div class="t" style="left:173px;top:4px;font-size:12.5px">JavaScript Scripts Inspector</div>
<svg class="a" style="left:348px;top:5px;" width="15" height="14" viewBox="0 0 15 14"><rect x="0.5" y="0.5" width="4" height="4" fill="#7ab84a" stroke="#4a8a2a" stroke-width=".6"/><rect x="0.5" y="5" width="4" height="4" fill="#7ab84a" stroke="#4a8a2a" stroke-width=".6"/><rect x="0.5" y="9.5" width="4" height="4" fill="#7ab84a" stroke="#4a8a2a" stroke-width=".6"/><rect x="5.5" y="0.5" width="4" height="4" fill="#7ab84a" stroke="#4a8a2a" stroke-width=".6"/><rect x="5.5" y="5" width="4" height="4" fill="#7ab84a" stroke="#4a8a2a" stroke-width=".6"/><rect x="5.5" y="9.5" width="4" height="4" fill="#7ab84a" stroke="#4a8a2a" stroke-width=".6"/><rect x="10.5" y="0.5" width="4" height="4" fill="#7ab84a" stroke="#4a8a2a" stroke-width=".6"/><rect x="10.5" y="5" width="4" height="4" fill="#7ab84a" stroke="#4a8a2a" stroke-width=".6"/><rect x="10.5" y="9.5" width="4" height="4" fill="#7ab84a" stroke="#4a8a2a" stroke-width=".6"/></svg>
<div class="t" style="left:364px;top:4px;font-size:12.5px">JUnit</div>
<svg class="a" style="left:1254px;top:10px;" width="7" height="4" viewBox="0 0 7 4"><path d="M0 0H7L3.5 4Z" fill="#777"/></svg>
<svg class="a" style="left:1270px;top:4px;" width="16" height="15" viewBox="0 0 16 15"><rect x="0.5" y="2.5" width="13" height="11" fill="#f3f9ff" stroke="#a88f58"/><rect x="1" y="2" width="12" height="2.5" fill="#3d8ad8"/><path d="M12 0V7M8.5 3.5H15.5" stroke="#c79a1e" stroke-width="2.6"/><path d="M12 1V6M9.5 3.5H14.5" stroke="#fff6c8" stroke-width="1"/></svg>
<svg class="a" style="left:1293px;top:10px;" width="7" height="4" viewBox="0 0 7 4"><path d="M0 0H7L3.5 4Z" fill="#111"/></svg>
<svg class="a" style="left:1311px;top:7px;" width="11" height="5" viewBox="0 0 11 5"><rect x="0.5" y="0.5" width="10" height="4" fill="#fff" stroke="#555"/></svg>
<svg class="a" style="left:1334px;top:6px;" width="11" height="11" viewBox="0 0 11 11"><rect x="0.5" y="0.5" width="10" height="10" fill="#fff" stroke="#555"/><path d="M1 2.5H10" stroke="#555"/></svg>
<div class="a mono" style="left:4px;top:27px;font-size:13.33px;line-height:18px;color:#000;white-space:pre">        at org.eclipse.jdt.internal.junit.runner.RemoteTestRunner.runTests(RemoteTestRunner.java:467)
        at org.eclipse.jdt.internal.junit.runner.RemoteTestRunner.runTests(RemoteTestRunner.java:683)
        at org.eclipse.jdt.internal.junit.runner.RemoteTestRunner.run(RemoteTestRunner.java:390)
        at org.eclipse.jdt.internal.junit.runner.RemoteTestRunner.main(RemoteTestRunner.java:197)</div>
<div class="a" style="left:1338px;top:25px;width:16px;height:101px;background:#f0f0f0"></div>
<div class="a" style="left:1338px;top:91px;width:16px;height:17px;background:#cdcdcd"></div>
<svg class="a" style="left:1341px;top:32px;" width="10" height="6" viewBox="0 0 10 6"><path d="M1 5L5 1L9 5" stroke="#555" stroke-width="1.8" fill="none"/></svg>
<svg class="a" style="left:1341px;top:113px;" width="10" height="6" viewBox="0 0 10 6"><path d="M1 1L5 5L9 1" stroke="#555" stroke-width="1.8" fill="none"/></svg>
<div class="a" style="left:1px;top:126px;width:1353px;height:15px;background:#f0f0f0"></div>
<div class="a" style="left:19px;top:126px;width:1252px;height:15px;background:#cdcdcd"></div>
<svg class="a" style="left:6px;top:130px;" width="6" height="9" viewBox="0 0 6 9"><path d="M5 1L1 4.5L5 8" stroke="#555" stroke-width="1.8" fill="none"/></svg>
<svg class="a" style="left:1326px;top:130px;" width="6" height="9" viewBox="0 0 6 9"><path d="M1 1L5 4.5L1 8" stroke="#555" stroke-width="1.8" fill="none"/></svg>
</div>
<div class="a" style="left:0px;top:702px;width:1366px;height:26px;background:#d6e0ea;border-top:1px solid #8fb0d0"></div>
<div class="a" style="z-index:10;left:489px;top:384px;width:771px;height:384px;background:#c3d7d8;border:1px solid #93abac;border-bottom:none"></div>
<div class="a" style="z-index:11;left:496px;top:391px;width:757px;height:374px;background:#ffffe1;overflow:hidden">
<div class="a" style="left:20px;top:0px;width:225px;height:20px;background:#f3f3dd;border:1px solid #e2e2c6"></div>
<svg class="a" style="left:9px;top:7px;" width="6" height="6" viewBox="0 0 6 6"><path d="M6 0V6H0Z" fill="#404040"/></svg>
<svg class="a" style="left:27px;top:8px;" width="8" height="8" viewBox="0 0 8 8"><rect x="0.5" y="0.5" width="7" height="7" fill="#f08a8a" stroke="#c8242c"/><rect x="2" y="2" width="4" height="4" fill="#e04848"/></svg>
<div class="t" style="left:43px;top:2px;font-size:13px">fs= DistributedFileSystem  (id=94)</div>
<svg class="a" style="left:28px;top:25px;" width="6" height="10" viewBox="0 0 6 10"><path d="M0.5 0.5L5.5 5L0.5 9.5Z" fill="none" stroke="#a0a0a0"/></svg>
<svg class="a" style="left:46px;top:28px;" width="8" height="8" viewBox="0 0 8 8"><rect x="0.5" y="0.5" width="7" height="7" fill="#f08a8a" stroke="#c8242c"/><rect x="2" y="2" width="4" height="4" fill="#e04848"/></svg>
<div class="t" style="left:62px;top:22px;font-size:13.15px">conf (Configured)= Configuration  (id=53)</div>
<svg class="a" style="left:28px;top:45px;" width="6" height="10" viewBox="0 0 6 10"><path d="M0.5 0.5L5.5 5L0.5 9.5Z" fill="none" stroke="#a0a0a0"/></svg>
<svg class="a" style="left:46px;top:48px;" width="8" height="8" viewBox="0 0 8 8"><rect x="0.5" y="0.5" width="7" height="7" fill="#f08a8a" stroke="#c8242c"/><rect x="2" y="2" width="4" height="4" fill="#e04848"/></svg>
<div class="t" style="left:62px;top:42px;font-size:13.15px">deleteOnExit= TreeSet&lt;E&gt;  (id=97)</div>
<svg class="a" style="left:28px;top:65px;" width="6" height="10" viewBox="0 0 6 10"><path d="M0.5 0.5L5.5 5L0.5 9.5Z" fill="none" stroke="#a0a0a0"/></svg>
<svg class="a" style="left:45px;top:68px;" width="9" height="8" viewBox="0 0 9 8"><path d="M4.5 0.5L8.5 7.5H0.5Z" fill="#3f7fcf" stroke="#2a5a9a" stroke-width=".8"/></svg>
<div class="t" style="left:62px;top:62px;font-size:13.15px">dfs= DFSClient  (id=101)</div>
<svg class="a" style="left:28px;top:85px;" width="6" height="10" viewBox="0 0 6 10"><path d="M0.5 0.5L5.5 5L0.5 9.5Z" fill="none" stroke="#a0a0a0"/></svg>
<svg class="a" style="left:46px;top:88px;" width="8" height="8" viewBox="0 0 8 8"><rect x="0.5" y="0.5" width="7" height="7" fill="#f08a8a" stroke="#c8242c"/><rect x="2" y="2" width="4" height="4" fill="#e04848"/></svg>
<div class="t" style="left:62px;top:82px;font-size:13.15px">key= FileSystem$Cache$Key  (id=106)</div>
<svg class="a" style="left:45px;top:108px;" width="9" height="8" viewBox="0 0 9 8"><path d="M4.5 0.5L8.5 7.5H0.5Z" fill="#3f7fcf" stroke="#2a5a9a" stroke-width=".8"/></svg>
<div class="t" style="left:62px;top:102px;font-size:13.15px">resolveSymlinks= true</div>
<svg class="a" style="left:28px;top:125px;" width="6" height="10" viewBox="0 0 6 10"><path d="M0.5 0.5L5.5 5L0.5 9.5Z" fill="none" stroke="#a0a0a0"/></svg>
<svg class="a" style="left:45px;top:127px;" width="9" height="9" viewBox="0 0 9 9"><path d="M4.5 0.5L8.5 4.5L4.5 8.5L0.5 4.5Z" fill="#fbe38a" stroke="#c89a20"/></svg>
<div class="t" style="left:62px;top:122px;font-size:13.15px">statistics= FileSystem$Statistics  (id=110)</div>
<svg class="a" style="left:28px;top:145px;" width="6" height="10" viewBox="0 0 6 10"><path d="M0.5 0.5L5.5 5L0.5 9.5Z" fill="none" stroke="#a0a0a0"/></svg>
<svg class="a" style="left:46px;top:148px;" width="8" height="8" viewBox="0 0 8 8"><rect x="0.5" y="0.5" width="7" height="7" fill="#f08a8a" stroke="#c8242c"/><rect x="2" y="2" width="4" height="4" fill="#e04848"/></svg>
<div class="t" style="left:62px;top:142px;font-size:13.15px">uri= URI  (id=111)</div>
<svg class="a" style="left:46px;top:168px;" width="8" height="8" viewBox="0 0 8 8"><rect x="0.5" y="0.5" width="7" height="7" fill="#f08a8a" stroke="#c8242c"/><rect x="2" y="2" width="4" height="4" fill="#e04848"/></svg>
<div class="t" style="left:62px;top:162px;font-size:13.15px">verifyChecksum= true</div>
<svg class="a" style="left:28px;top:185px;" width="6" height="10" viewBox="0 0 6 10"><path d="M0.5 0.5L5.5 5L0.5 9.5Z" fill="none" stroke="#a0a0a0"/></svg>
<svg class="a" style="left:46px;top:188px;" width="8" height="8" viewBox="0 0 8 8"><rect x="0.5" y="0.5" width="7" height="7" fill="#f08a8a" stroke="#c8242c"/><rect x="2" y="2" width="4" height="4" fill="#e04848"/></svg>
<div class="t" style="left:62px;top:182px;font-size:13.15px">workingDir= Path  (id=112)</div>
<div class="a" style="left:0px;top:234px;width:757px;height:3px;background:#f0f0f0"></div>
<div class="a mono" style="left:2px;top:238px;font-size:13.33px;line-height:18px;color:#000;white-space:pre">DFS[DFSClient[clientName=DFSClient_NONMAPREDUCE_1397005736_1, ugi=root (auth:SIMPLE)]]</div>
<div class="a" style="left:741px;top:237px;width:16px;height:137px;background:#f0f0f0"></div>
<svg class="a" style="left:744px;top:244px;" width="10" height="6" viewBox="0 0 10 6"><path d="M1 5L5 1L9 5" stroke="#c4c4c4" stroke-width="1.8" fill="none"/></svg>
<svg class="a" style="left:744px;top:346px;" width="10" height="6" viewBox="0 0 10 6"><path d="M1 1L5 5L9 1" stroke="#c4c4c4" stroke-width="1.8" fill="none"/></svg>
<div class="a" style="left:0px;top:357px;width:741px;height:17px;background:#f0f0f0;border-top:1px solid #fff"></div>
<svg class="a" style="left:5px;top:361px;" width="6" height="9" viewBox="0 0 6 9"><path d="M5 1L1 4.5L5 8" stroke="#c4c4c4" stroke-width="1.8" fill="none"/></svg>
<svg class="a" style="left:730px;top:361px;" width="6" height="9" viewBox="0 0 6 9"><path d="M1 1L5 4.5L1 8" stroke="#c4c4c4" stroke-width="1.8" fill="none"/></svg>
<svg class="a" style="left:744px;top:361px;" width="11" height="11" viewBox="0 0 11 11"><g fill="#bbb"><rect x="8" y="0" width="2" height="2"/><rect x="4" y="4" width="2" height="2"/><rect x="8" y="4" width="2" height="2"/><rect x="0" y="8" width="2" height="2"/><rect x="4" y="8" width="2" height="2"/><rect x="8" y="8" width="2" height="2"/></g></svg>
</div>
<!-- TASKBAR -->
<div class="a" style="left:0;top:728px;width:1366px;height:40px;background:linear-gradient(174.5deg,#403e3a 0%,#5e5b55 8%,#8d8a82 13%,#aeaba1 17%,#8f8c84 22%,#76736c 30%,#64615b 45%,#5a5853 70%,#53514c 100%)"></div>
<div class="a" style="left:1250px;top:728px;width:116px;height:40px;background:linear-gradient(90deg,#5f5e58 0%,#55544f 30%,#5b5a55 55%,#44443f 75%,#4a4945 100%)"></div>
<svg class="a" style="left:1320px;top:728px" width="30" height="40"><path d="M12 0 L0 40" stroke="#d9d9d0" stroke-width="1.2" opacity=".8"/></svg>
<!-- windows logo -->
<svg class="a" style="left:11px;top:734px" width="28" height="27"><path d="M0 4 L11 2.5 L11 12.5 L0 12.5Z M12.5 2.3 L27 0 L27 12.5 L12.5 12.5Z M0 14 L11 14 L11 24 L0 22.5Z M12.5 14 L27 14 L27 27 L12.5 24.7Z" fill="#fff"/></svg>
<!-- sourcetree -->
<svg class="a" style="left:65px;top:731px" width="33" height="33"><circle cx="16.5" cy="17" r="15.5" fill="#9fb3cf"/><circle cx="16.5" cy="16" r="14" fill="#c9d6e8"/><circle cx="16.5" cy="16" r="11" fill="#1b6fb8"/><path d="M16.5 26 V8 M16.5 20 L11 15 M16.5 17 L22 12 M16.5 13 L13 10" stroke="#5ee6e6" stroke-width="1.8" fill="none"/><circle cx="16.5" cy="8" r="1.8" fill="#5ee6e6"/><circle cx="11" cy="15" r="1.8" fill="#5ee6e6"/><circle cx="22" cy="12" r="1.8" fill="#5ee6e6"/></svg>
<!-- git -->
<svg class="a" style="left:127px;top:731px" width="33" height="33"><path d="M16.5 1 L32 16.5 L16.5 32 L1 16.5Z" fill="#ef5134"/><path d="M12 6 L16 10 V24 M16 14 L22 20" stroke="#fff" stroke-width="2" fill="none"/><circle cx="16" cy="24" r="2.4" fill="#fff"/><circle cx="22" cy="20" r="2.4" fill="#fff"/></svg>
<!-- me -->
<div class="a" style="left:189px;top:732px;width:32px;height:32px;background:#0c2646"></div>
<div class="t" style="left:192px;top:741px;color:#fff;font:bold 18px/16px 'Liberation Sans';letter-spacing:-0.8px">me</div>
<!-- explorer button -->
<div class="a" style="left:238px;top:729px;width:51px;height:39px;background:rgba(160,155,148,.35);border:1px solid rgba(210,205,198,.55)"></div>
<div class="a" style="left:290px;top:729px;width:3px;height:39px;border:1px solid rgba(210,205,198,.45)"></div>
<div class="a" style="left:294px;top:729px;width:3px;height:39px;border:1px solid rgba(210,205,198,.45)"></div>
<svg class="a" style="left:247px;top:734px" width="32" height="30"><path d="M1 6 H12 L14 9 H30 V27 H1Z" fill="#e9c866"/><rect x="6" y="3" width="4" height="3" fill="#3cb44a"/><rect x="13" y="5" width="4" height="3" fill="#d33"/><rect x="19" y="7" width="4" height="3" fill="#3a8de0"/><path d="M1 11 H30 V27 H1Z" fill="#f7dc8c"/><path d="M7 28 V19 H25 V28 H21 V23 H11 V28Z" fill="#6fb9e8"/></svg>
<!-- me active -->
<div class="a" style="left:300px;top:729px;width:58px;height:39px;background:rgba(195,190,184,.5);border:1px solid rgba(240,238,235,.85)"></div>
<div class="a" style="left:313px;top:732px;width:32px;height:32px;background:#0c2646"></div>
<div class="t" style="left:316px;top:741px;color:#fff;font:bold 18px/16px 'Liberation Sans';letter-spacing:-0.8px">me</div>
<!-- P button -->
<div class="a" style="left:362px;top:729px;width:58px;height:39px;background:rgba(160,155,148,.35);border:1px solid rgba(210,205,198,.5)"></div>
<div class="a" style="left:376px;top:732px;width:29px;height:30px;background:linear-gradient(#f07a1a,#d4560c)"></div>
<svg class="a" style="left:376px;top:732px" width="29" height="30"><path d="M6 5 H23 V18 H11 V25 H6Z M11 10 V14 H18 V10Z" fill="#fff" fill-rule="evenodd"/></svg>
<!-- du button -->
<div class="a" style="left:424px;top:729px;width:58px;height:39px;background:rgba(160,155,148,.35);border:1px solid rgba(210,205,198,.5)"></div>
<div class="a" style="left:437px;top:732px;width:32px;height:32px;background:linear-gradient(#3db4f5,#1677e0);border-radius:6px"></div>
<svg class="a" style="left:437px;top:732px" width="32" height="32"><path d="M7 21 A9 9 0 0 1 25 21" stroke="#fff" stroke-width="2.5" fill="none"/><rect x="4" y="18" width="4" height="7" rx="2" fill="#fff"/><rect x="24" y="18" width="4" height="7" rx="2" fill="#fff"/><text x="16" y="24" font-family="Liberation Sans" font-weight="bold" font-size="10" fill="#fff" text-anchor="middle">du</text></svg>
<div class="a" style="left:486px;top:729px;width:4px;height:39px;border-left:1px solid rgba(210,205,198,.5)"></div>
<!-- tray -->
<div class="t" style="left:1260px;top:741px;color:#fff;font-size:13px">NG</div>
<div class="t" style="left:1305px;top:733px;color:#fff;font-size:13px">17:58</div>
<div class="t" style="left:1287px;top:751px;color:#fff;font-size:13.3px">2014/11/16</div>


</body></html>
